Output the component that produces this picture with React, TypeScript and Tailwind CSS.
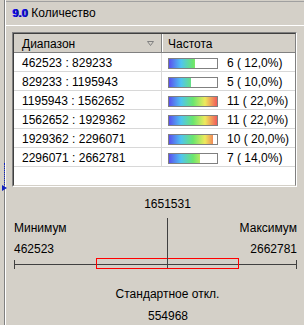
const rows = [
  { range: "462523 : 829233", count: 6 },
  { range: "829233 : 1195943", count: 5 },
  { range: "1195943 : 1562652", count: 11 },
  { range: "1562652 : 1929362", count: 11 },
  { range: "1929362 : 2296071", count: 10 },
  { range: "2296071 : 2662781", count: 7 },
];

const stats = { min: 462523, max: 2662781, mean: 1651531, sd: 554968 };

const CHART_W = 283;
const total = rows.reduce((s, r) => s + r.count, 0);
const maxCount = Math.max(...rows.map((r) => r.count));

function pos(v: number) {
  return ((v - stats.min) / (stats.max - stats.min)) * CHART_W;
}

function Gutter() {
  return (
    <div className="relative flex w-[6px] shrink-0">
      <div className="w-[4px]" />
      <div className="w-[1px] bg-[#808080]" />
      <div className="w-[1px] bg-white" />
      <div className="absolute left-[4px] top-[163px] h-[22px] border-l border-dotted border-[#1020c0]" />
      <svg className="absolute left-[2px] top-[185px]" width="6" height="6">
        <polygon points="0,0 5,3 0,6" fill="#1020c0" />
      </svg>
    </div>
  );
}

function Bar({ count }: { count: number }) {
  return (
    <div className="mt-[5px] h-[11px] w-[50px] border border-[#808080] bg-white">
      <div
        className="h-full overflow-hidden"
        style={{ width: `${(count / maxCount) * 48}px` }}
      >
        <div className="h-full w-[48px] bg-[linear-gradient(to_right,#5a50ee,#4fc4f2_25%,#6ae66e_50%,#eeea5c_75%,#f25a5a)]" />
      </div>
    </div>
  );
}

function HistogramTable() {
  return (
    <div className="ml-[6px] mt-[6px] h-[155px] w-[285px] border border-t-[#808080] border-l-[#808080] border-r-white border-b-white">
      <div className="h-full border border-t-[#404040] border-l-[#404040] border-r-[#808080] border-b-[#d4d0c8] bg-white">
        <div className="flex h-[19px] border-b border-[#808080] bg-[#d4d0c8]">
          <div className="flex w-[148px] justify-between border-r border-[#808080] pl-[8px] pr-[7px] pt-[3px]">
            <span>Диапазон</span>
            <svg className="mt-[4px]" width="7" height="5">
              <polygon points="0.5,0.5 6.5,0.5 3.5,4.5" fill="none" stroke="#808080" />
            </svg>
          </div>
          <div className="flex-1 border-l border-white pl-[5px] pt-[3px]">Частота</div>
        </div>
        {rows.map((r) => (
          <div key={r.range} className="flex h-[19px] border-b border-[#d8d8d8]">
            <div className="w-[148px] border-r border-[#d8d8d8] pl-[8px] pt-[3px]">
              {r.range}
            </div>
            <div className="flex items-start pl-[6px]">
              <Bar count={r.count} />
              <span className="ml-[9px] pt-[3px] whitespace-nowrap">
                {r.count} ( {((r.count / total) * 100).toFixed(1).replace(".", ",")}%)
              </span>
            </div>
          </div>
        ))}
      </div>
    </div>
  );
}

function Centered({ x, children }: { x: number; children: React.ReactNode }) {
  return (
    <div className="relative h-[14px]">
      <span
        className="absolute top-0 -translate-x-1/2 whitespace-nowrap"
        style={{ left: `${x}px` }}
      >
        {children}
      </span>
    </div>
  );
}

function RangeChart() {
  const meanX = Math.round(pos(stats.mean));
  const lo = Math.round(pos(stats.mean - stats.sd));
  const hi = Math.round(pos(stats.mean + stats.sd));
  return (
    <div className="relative ml-[8px] w-[283px] pt-[10px]">
      <div
        className="absolute top-[31px] h-[50px] w-[1px] bg-[#404040]"
        style={{ left: `${meanX}px` }}
      />
      <Centered x={meanX + 0.5}>{stats.mean}</Centered>
      <div className="mt-[10px] flex justify-between">
        <div className="flex flex-col gap-[7px]">
          <span>Минимум</span>
          <span>{stats.min}</span>
        </div>
        <div className="flex flex-col items-end gap-[7px]">
          <span>Максимум</span>
          <span>{stats.max}</span>
        </div>
      </div>
      <svg className="block" width={CHART_W} height="14">
        <line x1="0" y1="8.5" x2={CHART_W} y2="8.5" stroke="#404040" />
        <line x1="0.5" y1="4" x2="0.5" y2="13" stroke="#404040" />
        <line x1={CHART_W - 0.5} y1="4" x2={CHART_W - 0.5} y2="13" stroke="#404040" />
        <rect x={lo + 0.5} y="2.5" width={hi - lo} height="10" fill="none" stroke="#ff0000" />
      </svg>
      <div className="mt-[17px]">
        <Centered x={meanX + 0.5}>Стандартное откл.</Centered>
      </div>
      <div className="mt-[8px]">
        <Centered x={meanX + 1}>{stats.sd}</Centered>
      </div>
    </div>
  );
}

export default function App() {
  return (
    <div className="flex h-[325px] w-[304px] overflow-hidden bg-[#d4d0c8] font-['Liberation_Sans',sans-serif] text-[12px] leading-[14px] text-black">
      <Gutter />
      <div className="flex flex-1 flex-col pt-[1px]">
        <div className="flex h-[25px] items-start gap-[4px] border-t border-b border-t-[#a0a0a0] border-b-white pl-[6px] pt-[4px]">
          <span className="text-[11px] font-bold text-[#1010f0] [text-shadow:1px_0_0_#000080]">9.0</span>
          <span>Количество</span>
        </div>
        <HistogramTable />
        <RangeChart />
      </div>
    </div>
  );
}
